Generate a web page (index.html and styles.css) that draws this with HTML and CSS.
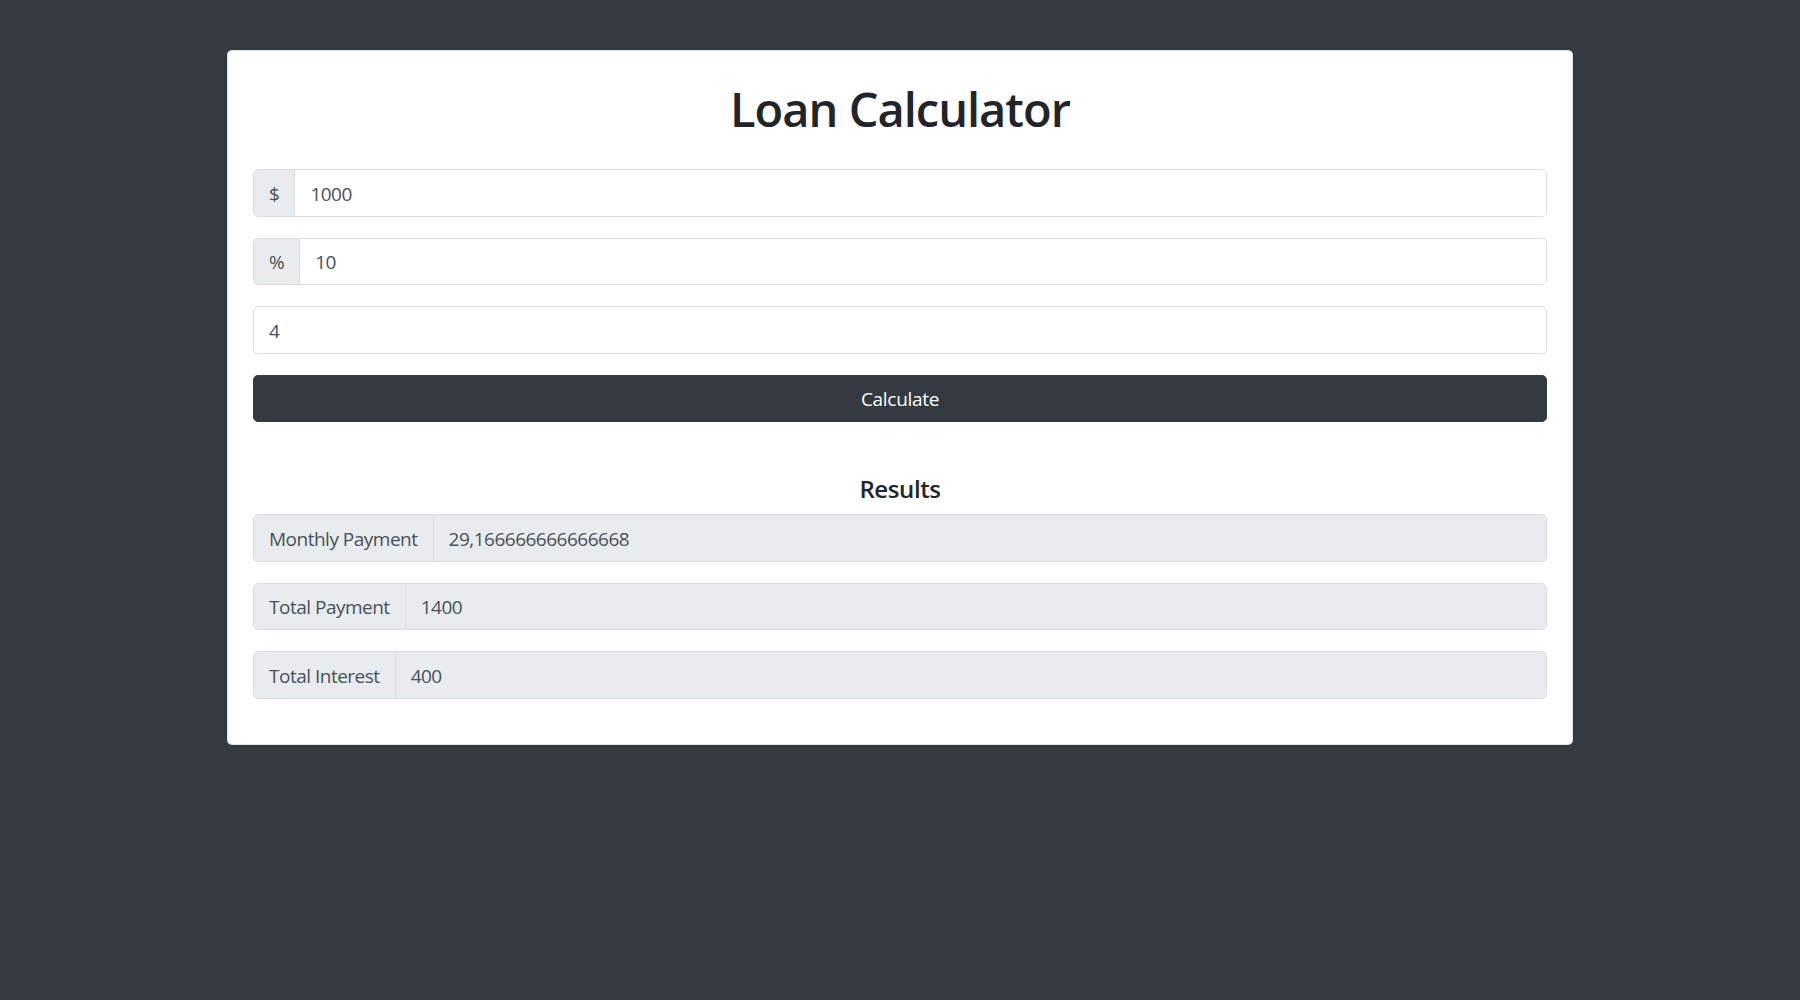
FILE: index.html
```html
<!DOCTYPE html>
<html lang="en">
<head>
<meta charset="utf-8">
<title>Loan Calculator</title>
<link rel="stylesheet" href="styles.css">
</head>
<body>
<main class="page">
  <section class="card">
    <h1 class="title">Loan Calculator</h1>
    <form class="loan-form">
      <div class="input-group">
        <span class="addon">$</span>
        <div class="control">1000</div>
      </div>
      <div class="input-group">
        <span class="addon">%</span>
        <div class="control">10</div>
      </div>
      <div class="input-group">
        <div class="control">4</div>
      </div>
      <button type="button" class="btn">Calculate</button>
    </form>
    <h5 class="results-title">Results</h5>
    <div class="results">
      <div class="input-group readonly">
        <span class="addon">Monthly Payment</span>
        <div class="control">29,166666666666668</div>
      </div>
      <div class="input-group readonly">
        <span class="addon">Total Payment</span>
        <div class="control">1400</div>
      </div>
      <div class="input-group readonly">
        <span class="addon">Total Interest</span>
        <div class="control">400</div>
      </div>
    </div>
  </section>
</main>
</body>
</html>
```

FILE: styles.css
```css
* { box-sizing: border-box; }

html, body {
  margin: 0;
  padding: 0;
}

body {
  background: #343a40;
  font-family: "Open Sans", "Noto Sans", "Liberation Sans", sans-serif;
  color: #212529;
  font-size: 19px;
  letter-spacing: -0.5px;
  min-height: 1000px;
}

.page {
  padding-top: 50px;
  display: flex;
  justify-content: center;
}

.card {
  width: 1346px;
  background: #fff;
  border: 1px solid rgba(0, 0, 0, 0.125);
  border-radius: 5px;
  padding: 25px;
}

.title {
  margin: 3px 0 0;
  height: 90px;
  font-size: 47px;
  line-height: 60px;
  font-weight: 600;
  letter-spacing: -1px;
  text-align: center;
  color: #212529;
}

.loan-form {
  display: flex;
  flex-direction: column;
  gap: 21px;
}

.input-group {
  display: flex;
  height: 47.5px;
  border: 1px solid #dadee3;
  border-radius: 5px;
  overflow: hidden;
  color: #495057;
  font-size: 19px;
}

.addon {
  display: flex;
  align-items: center;
  padding: 2px 15px 0;
  background: #e9ecef;
  border-right: 1px solid #dadee3;
  color: #495057;
  white-space: nowrap;
}

.control {
  flex: 1;
  display: flex;
  align-items: center;
  padding: 2px 15px 0;
  background: #fff;
}

.btn {
  height: 47.5px;
  border: 1px solid #343a40;
  border-radius: 5px;
  background: #343a40;
  color: #fff;
  font-family: inherit;
  font-size: 19px;
  letter-spacing: -0.3px;
  padding: 2px 0 0;
}

.results-title {
  margin: 52px 0 10px;
  font-size: 24px;
  line-height: 30px;
  font-weight: 600;
  letter-spacing: -0.4px;
  text-align: center;
  color: #212529;
}

.results {
  display: flex;
  flex-direction: column;
  gap: 21px;
  padding-bottom: 20px;
}

.readonly .control {
  background: #e9ecef;
}
```
